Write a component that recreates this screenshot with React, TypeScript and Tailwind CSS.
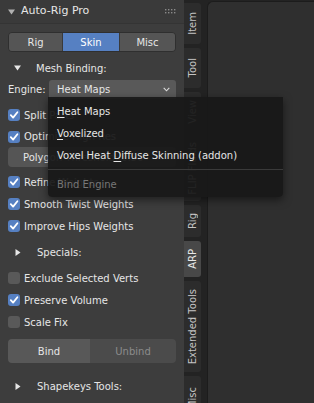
import type { ReactNode } from 'react';

// Blender sidebar: Auto-Rig Pro panel, Skin tab, engine dropdown open.

const font = "font-['DejaVu_Sans',sans-serif]";

function Check({ on }: { on?: boolean }) {
  return (
    <span
      className={[
        'w-[12px] h-[12px] rounded-[3px] shrink-0 flex items-center justify-center',
        on ? 'bg-[#5680c2]' : 'bg-[#595959]',
      ].join(' ')}
    >
      {on && (
        <svg width="10" height="10" viewBox="0 0 10 10">
          <path d="M1.8 5.2 L4.1 7.6 L8.4 2.2" fill="none" stroke="#fff" strokeWidth="1.8" strokeLinecap="round" strokeLinejoin="round" />
        </svg>
      )}
    </span>
  );
}

function CheckRow({ label, on, h = 'h-[22px]' }: { label: string; on?: boolean; h?: string }) {
  return (
    <div className={`${h} flex items-center gap-[4px] shrink-0`}>
      <Check on={on} />
      <span className="text-[#e6e6e6] whitespace-nowrap">{label}</span>
    </div>
  );
}

function Down({ color = '#e6e6e6', w = 7 }: { color?: string; w?: number }) {
  return (
    <svg width={w} height={w - 1} viewBox="0 0 7 6">
      <path d="M0 0.5 L7 0.5 L3.5 5.5 Z" fill={color} />
    </svg>
  );
}

function Right() {
  return (
    <svg width="6" height="7" viewBox="0 0 6 7">
      <path d="M0.5 0 L5.5 3.5 L0.5 7 Z" fill="#e6e6e6" />
    </svg>
  );
}

function Tab({ label, h, active }: { label: string; h: string; active?: boolean }) {
  return (
    <div
      className={[
        'w-[17px] shrink-0 rounded-r-[3px] flex items-center justify-center',
        h,
        active ? 'bg-[#484848] text-[#e8e8e8]' : 'bg-[#2c2c2c] text-[#c4c4c4]',
      ].join(' ')}
    >
      <span className="[writing-mode:vertical-rl] rotate-180 whitespace-nowrap">{label}</span>
    </div>
  );
}

function MenuItem({ children }: { children: ReactNode }) {
  return (
    <div className="h-[22px] flex items-center px-[9px] text-[#e6e6e6]">
      <span className="whitespace-pre">{children}</span>
    </div>
  );
}

export default function App() {
  return (
    <div className={`${font} text-[10px] w-[314px] h-[403px] bg-[#232323] flex relative overflow-hidden`}>
      {/* panel */}
      <div className="w-[184px] shrink-0 bg-[#3d3d3d] flex flex-col">
        <div className="h-[24px] shrink-0 bg-[#3a3a3a] border-b border-[#343434] flex items-center pl-[8px] pr-[8px]">
          <Down color="#b0b0b0" w={7} />
          <span className="ml-[6px] text-[11px] text-[#e6e6e6]">Auto-Rig Pro</span>
          <svg className="ml-auto" width="11" height="5" viewBox="0 0 11 5">
            {[0, 3, 6, 9].map((x) => (
              <g key={x} fill="#8a8a8a">
                <rect x={x} y={0} width="1.4" height="1.4" />
                <rect x={x} y={3} width="1.4" height="1.4" />
              </g>
            ))}
          </svg>
        </div>

        <div className="px-[8px] flex flex-col">
          <div className="mt-[8px] h-[20px] flex rounded-[4px] overflow-hidden border border-[#2f2f2f] text-center">
            <div className="w-[54px] bg-[#555555] text-[#e6e6e6] flex items-center justify-center border-r border-[#3a3a3a]">Rig</div>
            <div className="w-[56px] bg-[#5680c2] text-white flex items-center justify-center">Skin</div>
            <div className="flex-1 bg-[#555555] text-[#e6e6e6] flex items-center justify-center border-l border-[#3a3a3a]">Misc</div>
          </div>

          <div className="mt-[5px] h-[22px] flex items-center pl-[6px]">
            <Down />
            <span className="ml-[15px] text-[#e6e6e6]">Mesh Binding:</span>
          </div>

          <div className="h-[20px] flex items-center">
            <span className="text-[#e6e6e6] w-[41px]">Engine:</span>
            <div className="flex-1 h-[19px] bg-[#595959] rounded-t-[3px] flex items-center pl-[8px] pr-[6px] text-[#e6e6e6]">
              <span>Heat Maps</span>
              <svg className="ml-auto" width="7" height="5" viewBox="0 0 7 5">
                <path d="M0.7 0.8 L3.5 3.8 L6.3 0.8" fill="none" stroke="#dcdcdc" strokeWidth="1.1" />
              </svg>
            </div>
          </div>

          <div className="mt-[5px]" />
          <CheckRow label="Split Parts" on />
          <CheckRow label="Optimize High Res" on h="h-[21px]" />
          <div className="h-[20px] bg-[#555555] rounded-[4px] flex items-center pl-[15px] text-[#e6e6e6] whitespace-nowrap">
            Polygon Threshold: 0.50
          </div>
          <div className="mt-[4px]" />
          <CheckRow label="Refine Weights" on />
          <CheckRow label="Smooth Twist Weights" on />
          <CheckRow label="Improve Hips Weights" on />

          <div className="mt-[4px] h-[22px] flex items-center pl-[7px]">
            <Right />
            <span className="ml-[16px] text-[#e6e6e6]">Specials:</span>
          </div>

          <div className="mt-[4px]" />
          <CheckRow label="Exclude Selected Verts" />
          <CheckRow label="Preserve Volume" on />
          <CheckRow label="Scale Fix" />

          <div className="mt-[6px] h-[24px] flex rounded-[4px] overflow-hidden">
            <div className="w-[82px] bg-[#585858] text-[#e6e6e6] flex items-center justify-center">Bind</div>
            <div className="flex-1 bg-[#4b4b4b] text-[#8c8c8c] flex items-center justify-center">Unbind</div>
          </div>

          <div className="mt-[12px] h-[22px] flex items-center pl-[7px]">
            <Right />
            <span className="ml-[16px] text-[#e6e6e6]">Shapekeys Tools:</span>
          </div>
        </div>
      </div>

      {/* tab strip */}
      <div className="w-[23px] shrink-0 flex flex-col gap-[4px] pt-[3px]">
        <Tab label="Item" h="h-[41px]" />
        <Tab label="Tool" h="h-[40px]" />
        <Tab label="View" h="h-[39px]" />
        <Tab label="FLIP Fluids" h="h-[66px]" />
        <Tab label="Rig" h="h-[32px]" />
        <Tab label="ARP" h="h-[36px]" active />
        <Tab label="Extended Tools" h="h-[91px]" />
        <Tab label="Misc" h="h-[44px]" />
      </div>

      {/* viewport region */}
      <div className="flex-1 mt-[1px] rounded-tl-[6px] bg-[#2f2f2f] border-l border-t border-[#1c1c1c]" />

      {/* engine menu */}
      <div className="absolute left-[48px] top-[97px] w-[235px] bg-[#181818]/[0.94] rounded-b-[4px] shadow-[0_3px_8px_rgba(0,0,0,0.5)] pt-[3px] pb-[2px]">
        <MenuItem>
          <u className="underline-offset-2">H</u>eat Maps
        </MenuItem>
        <MenuItem>
          <u className="underline-offset-2">V</u>oxelized
        </MenuItem>
        <MenuItem>
          {'Voxel Heat '}
          <u className="underline-offset-2">D</u>iffuse Skinning (addon)
        </MenuItem>
        <div className="my-[3px] h-px bg-[#3a3a3a]" />
        <div className="h-[22px] flex items-center px-[9px] text-[#777777]">Bind Engine</div>
      </div>
    </div>
  );
}
